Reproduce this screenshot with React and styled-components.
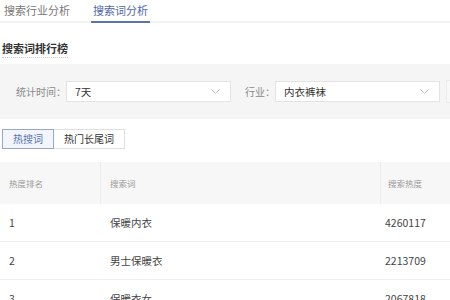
import React from 'react'
import styled, { createGlobalStyle } from 'styled-components'

const GlobalStyle = createGlobalStyle`
    body {
        margin: 0;
        background: #fff;
        font-family: "Noto Sans CJK SC", "Noto Sans", sans-serif;
        color: #333;
    }
`

const rows = [
    { rank: 1, word: '保暖内衣', heat: '4260117' },
    { rank: 2, word: '男士保暖衣', heat: '2213709' },
    { rank: 3, word: '保暖衣女', heat: '2067818' },
]

function Chevron() {
    return (
        <svg width="9" height="5" viewBox="0 0 9 5">
            <path d="M0.5 0.5 L4.5 4.5 L8.5 0.5" fill="none" stroke="#bbb" strokeWidth="1" />
        </svg>
    )
}

function App() {
    return (
        <Page>
            <GlobalStyle />
            <TabBar>
                <Tab>搜索行业分析</Tab>
                <Tab active>搜索词分析</Tab>
            </TabBar>
            <Heading>搜索词排行榜</Heading>
            <Filters>
                <Label>统计时间：</Label>
                <Select>
                    <span>7天</span>
                    <Chevron />
                </Select>
                <Label spaced>行业：</Label>
                <Select>
                    <span>内衣裤袜</span>
                    <Chevron />
                </Select>
                <EdgeBox />
            </Filters>
            <ButtonGroup>
                <ToggleButton active>热搜词</ToggleButton>
                <ToggleButton>热门长尾词</ToggleButton>
            </ButtonGroup>
            <Table>
                <HeadRow>
                    <HeadCell>热度排名</HeadCell>
                    <HeadCell>搜索词</HeadCell>
                    <HeadCell>搜索热度</HeadCell>
                </HeadRow>
                {rows.map((r) => (
                    <Row key={r.rank}>
                        <Cell>{r.rank}</Cell>
                        <Cell>{r.word}</Cell>
                        <Cell>{r.heat}</Cell>
                    </Row>
                ))}
            </Table>
        </Page>
    )
}

export default App

const Page = styled.div`
    width: 450px;
    height: 300px;
    overflow: hidden;
`

const TabBar = styled.div`
    display: flex;
    height: 21px;
    padding-left: 2px;
    border-bottom: 2px solid #f2f2f2;
`

const Tab = styled.div`
    padding: 0 2px;
    margin-right: 19px;
    font-size: 11px;
    line-height: 21px;
    color: ${(p) => (p.active ? '#4f67a8' : '#777')};
    border-bottom: 2px solid ${(p) => (p.active ? '#5a72b2' : 'transparent')};
    margin-bottom: -2px;
`

const Heading = styled.div`
    display: inline-block;
    margin: 18px 0 6px 2px;
    font-size: 11px;
    font-weight: bold;
    line-height: 14px;
    color: #333;
    padding-bottom: 2px;
    border-bottom: 1px dotted #ccc;
`

const Filters = styled.div`
    display: flex;
    align-items: center;
    width: 480px;
    height: 55px;
    padding-left: 16px;
    background: #f5f5f5;
    box-sizing: border-box;
`

const Label = styled.div`
    font-size: 10px;
    color: #888;
    white-space: nowrap;
    margin-left: ${(p) => (p.spaced ? '14px' : '0')};
`

const Select = styled.div`
    display: flex;
    align-items: center;
    justify-content: space-between;
    width: 165px;
    height: 21px;
    padding: 0 10px 0 8px;
    box-sizing: border-box;
    background: #fff;
    border: 1px solid #e3e3e3;
    font-size: 10.5px;
    color: #333;
`

const EdgeBox = styled.div`
    width: 20px;
    height: 21px;
    margin-left: 6px;
    border: 1px solid #ebebeb;
    border-right: none;
    background: #f8f8f8;
`

const ButtonGroup = styled.div`
    display: flex;
    margin: 10px 0 13px 2px;
`

const ToggleButton = styled.div`
    height: 20px;
    padding: 0 10px;
    box-sizing: border-box;
    font-size: 10px;
    line-height: 18px;
    color: ${(p) => (p.active ? '#5a72b2' : '#333')};
    background: ${(p) => (p.active ? '#f2f5fb' : '#fff')};
    border: 1px solid ${(p) => (p.active ? '#9aa8c8' : '#e0e0e0')};
    & + & {
        border-left: none;
    }
`

const Table = styled.div`
    width: 480px;
`

const HeadRow = styled.div`
    display: grid;
    grid-template-columns: 100px 280px 1fr;
    height: 42px;
    background: #f7f7f7;
`

const HeadCell = styled.div`
    display: flex;
    align-items: center;
    padding-left: 9px;
    font-size: 8.5px;
    color: #999;
    & + & {
        border-left: 1px solid #ececec;
    }
    &:last-child {
        padding-left: 7px;
    }
`

const Row = styled.div`
    display: grid;
    grid-template-columns: 100px 280px 1fr;
    height: 37px;
    border-bottom: 1px solid #eee;
`

const Cell = styled.div`
    display: flex;
    align-items: center;
    padding-left: 9px;
    font-size: 10.5px;
    color: #444;
    &:nth-child(2) {
        padding-left: 10px;
    }
    &:last-child {
        padding-left: 5px;
    }
`
